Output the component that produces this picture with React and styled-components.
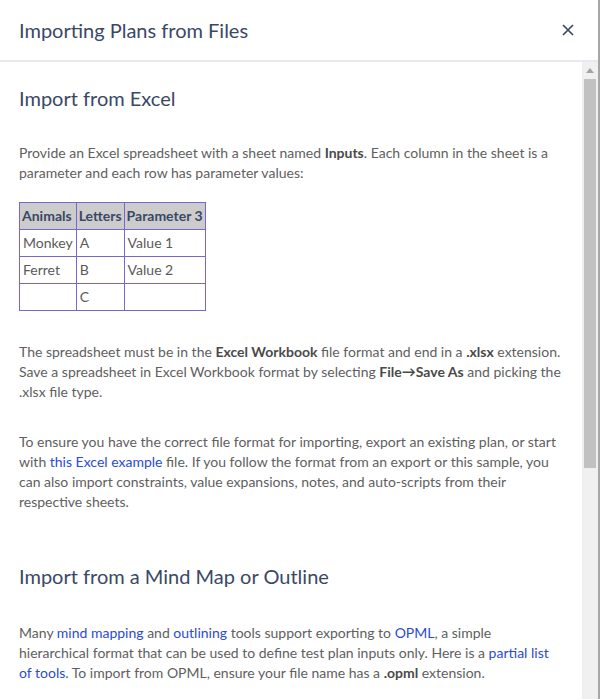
import React from 'react'
import styled, { createGlobalStyle } from 'styled-components'

const GlobalStyle = createGlobalStyle`
  html, body {
    margin: 0;
    padding: 0;
    overflow: hidden;
    background: #fff;
  }
  body {
    font-family: Lato, "Liberation Sans", sans-serif;
  }
`

const Modal = styled.div`
  box-sizing: border-box;
  width: 600px;
  height: 716px;
  display: flex;
  flex-direction: column;
  background: #fff;
  border-right: 2px solid #a6a6a6;
`

const Header = styled.header`
  flex: none;
  height: 60px;
  display: flex;
  align-items: center;
  justify-content: space-between;
  padding: 0 23px 0 19px;
  border-bottom: 2px solid #e8e8ee;
`

const Title = styled.h1`
  margin: 0;
  font-size: 20px;
  font-weight: 400;
  color: #3a4865;
`

const Close = styled.button`
  border: 0;
  background: none;
  padding: 0;
  width: 14px;
  height: 14px;
  display: flex;
  align-items: center;
  justify-content: center;
  cursor: pointer;
`

const Frame = styled.div`
  flex: 1;
  min-height: 0;
  display: flex;
`

const Body = styled.div`
  flex: 1;
  min-width: 0;
  overflow: hidden;
  padding: 22px 19px;
  color: #606060;
  font-size: 14px;
  line-height: 20px;
`

const ScrollBar = styled.div`
  flex: none;
  width: 16px;
  display: flex;
  flex-direction: column;
  align-items: center;
  background: #f0f0f0;
`

const Arrow = styled.div`
  flex: none;
  height: 17px;
  display: flex;
  align-items: center;
  justify-content: center;
`

const Thumb = styled.div`
  flex: none;
  width: 12px;
  height: 389px;
  background: #c1c1c1;
`

const Spacer = styled.div`
  flex: 1;
`

const Heading = styled.h2`
  margin: ${p => p.$top || 0}px 0 ${p => p.$bottom || 31}px;
  font-size: 20px;
  line-height: 28px;
  font-weight: 400;
  color: #3a4865;
`

const Para = styled.p`
  margin: 0 0 ${p => p.$bottom ?? 30}px;
`

const Strong = styled.b`
  font-weight: 700;
  color: #4a4a4a;
`

const A = styled.a`
  color: #2a4bd4;
  text-decoration: none;
`

const Table = styled.table`
  border-collapse: collapse;
  margin: 0 0 31px;
  font-size: 14px;
`

const Th = styled.th`
  background: #cccccc;
  border: 1px solid #7a66c8;
  height: 26px;
  padding: 0 2px;
  text-align: left;
  font-weight: 700;
  color: #3a4865;
`

const Td = styled.td`
  border: 1px solid #7a66c8;
  height: 26px;
  padding: 0 3px;
  color: #5a5a5a;
`

const rows = [
  ['Monkey', 'A', 'Value 1'],
  ['Ferret', 'B', 'Value 2'],
  ['', 'C', ''],
]

export default function App() {
  return (
    <>
      <GlobalStyle />
      <Modal>
        <Header>
          <Title>Importing Plans from Files</Title>
          <Close aria-label="Close">
            <svg width="12" height="12" viewBox="0 0 12 12">
              <path d="M1 1 L11 11 M11 1 L1 11" stroke="#3a4865" strokeWidth="1.7" />
            </svg>
          </Close>
        </Header>
        <Frame>
          <Body>
            <Heading>Import from Excel</Heading>
            <Para $bottom={19}>
              Provide an Excel spreadsheet with a sheet named <Strong>Inputs</Strong>. Each column in the sheet is a
              parameter and each row has parameter values:
            </Para>
            <Table>
              <thead>
                <tr>
                  <Th>Animals</Th>
                  <Th>Letters</Th>
                  <Th>Parameter 3</Th>
                </tr>
              </thead>
              <tbody>
                {rows.map((r, i) => (
                  <tr key={i}>
                    {r.map((c, j) => <Td key={j}>{c}</Td>)}
                  </tr>
                ))}
              </tbody>
            </Table>
            <Para>
              The spreadsheet must be in the <Strong>Excel Workbook</Strong> file format and end in a <Strong>.xlsx</Strong> extension.
              Save a spreadsheet in Excel Workbook format by selecting <Strong>File→Save As</Strong> and picking
              the .xlsx file type.
            </Para>
            <Para $bottom={0}>
              To ensure you have the correct file format for importing, export an existing plan, or start
              with <A href="#">this Excel example</A> file. If you follow the format from an export or this sample, you
              can also import constraints, value expansions, notes, and auto-scripts from their
              respective sheets.
            </Para>
            <Heading $top={50} $bottom={33}>Import from a Mind Map or Outline</Heading>
            <Para>
              Many <A href="#">mind mapping</A> and <A href="#">outlining</A> tools support exporting to <A href="#">OPML</A>, a simple
              hierarchical format that can be used to define test plan inputs only. Here is a <A href="#">partial list
              of tools</A>. To import from OPML, ensure your file name has a <Strong>.opml</Strong> extension.
            </Para>
          </Body>
          <ScrollBar>
            <Arrow>
              <svg width="8" height="5" viewBox="0 0 8 5"><polygon points="4,0 8,5 0,5" fill="#a3a3a3" /></svg>
            </Arrow>
            <Thumb />
            <Spacer />
            <Arrow>
              <svg width="8" height="5" viewBox="0 0 8 5"><polygon points="0,0 8,0 4,5" fill="#505050" /></svg>
            </Arrow>
          </ScrollBar>
        </Frame>
      </Modal>
    </>
  )
}
